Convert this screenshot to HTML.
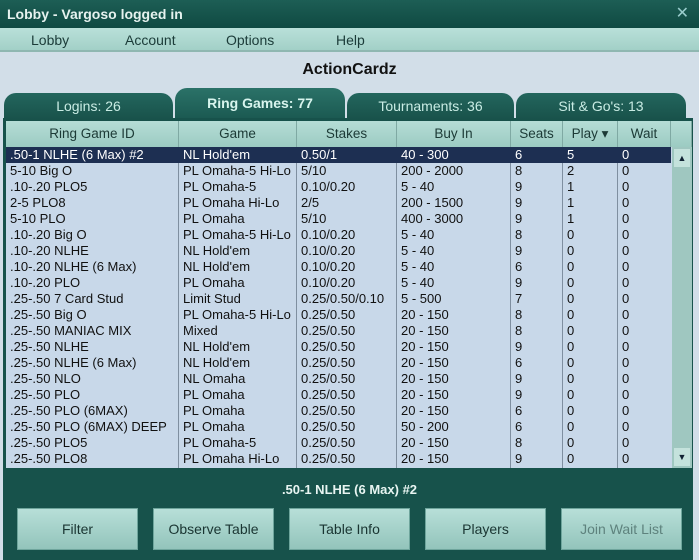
<!DOCTYPE html>
<html><head><style>
*{margin:0;padding:0;box-sizing:border-box}
body{width:699px;height:560px;overflow:hidden;background:#d2dee8;font-family:"Liberation Sans",sans-serif;position:relative}
.title{position:absolute;left:0;top:0;width:699px;height:28px;background:linear-gradient(#1d5e55,#0f4a42);color:#e6f2ef;font-weight:bold;font-size:14px;line-height:28px;padding-left:7px}
.title .x{position:absolute;right:10px;top:0;color:#9cc;font-weight:normal;font-size:16px}
.menu{position:absolute;left:0;top:28px;width:699px;height:24px;background:linear-gradient(#b9e0d9,#a2d0c7);border-bottom:2px solid #8fb7b1}
.menu span{position:absolute;top:4px;font-size:14px;color:#1b3b38}
.brand{position:absolute;top:61px;width:699px;text-align:center;font-weight:bold;font-size:16px;color:#111}
.tab{position:absolute;height:30px;border-radius:12px 12px 0 0;background:linear-gradient(#23665d,#174f48);color:#c9ece4;font-size:14px;text-align:center;line-height:26px}
.tab.sel{background:linear-gradient(#2b7268,#1b5a52);color:#d8f5ee;font-weight:bold;line-height:30px}
.panel{position:absolute;left:3px;top:118px;width:690px;height:442px;background:#17524b}
.grid{position:absolute;left:6px;top:121px;width:686px;height:347px;background:#c8d8e9}
.hdr{position:absolute;top:0;height:26px;background:linear-gradient(#b6ddd6,#9ccbc2);border-right:1px solid #7fa9a3;font-size:13.5px;color:#1c3a36;text-align:center;line-height:25px}
.col{position:absolute;top:26px;height:321px;border-right:1px solid #7f8fa0}
.row{position:absolute;left:0;width:665px;height:16px;font-size:13px;color:#111;line-height:16px}
.row span{position:absolute;top:0;padding-left:4px;white-space:nowrap}
.row.sel{background:#1d2f52;color:#fff}
.sb{position:absolute;left:666px;top:26px;width:20px;height:321px;background:#9fc7c0}
.sb .b{position:absolute;left:2px;width:16px;height:18px;background:#c4e2dc;font-size:9px;text-align:center;line-height:18px;color:#123}
.cur{position:absolute;top:482px;width:699px;text-align:center;color:#e8f5f2;font-weight:bold;font-size:13px}
.btn{position:absolute;top:508px;width:121px;height:42px;background:linear-gradient(#b7dfd8,#93c4bb);border:1px solid #6ea59c;font-size:14px;color:#1a3532;text-align:center;line-height:40px}
</style></head><body>
<div class="title">Lobby - Vargoso logged in<span class="x">✕</span></div>
<div class="menu"><span style="left:31px">Lobby</span><span style="left:125px">Account</span><span style="left:226px">Options</span><span style="left:336px">Help</span></div>
<div class="brand">ActionCardz</div>
<div class="panel"></div>
<div class="tab" style="left:4px;top:93px;width:169px">Logins: 26</div>
<div class="tab" style="left:347px;top:93px;width:167px">Tournaments: 36</div>
<div class="tab" style="left:516px;top:93px;width:170px">Sit &amp; Go's: 13</div>
<div class="tab sel" style="left:175px;top:88px;width:170px">Ring Games: 77</div>
<div class="grid">
<div class="hdr" style="left:0;width:173px">Ring Game ID</div>
<div class="hdr" style="left:173px;width:118px">Game</div>
<div class="hdr" style="left:291px;width:100px">Stakes</div>
<div class="hdr" style="left:391px;width:114px">Buy In</div>
<div class="hdr" style="left:505px;width:52px">Seats</div>
<div class="hdr" style="left:557px;width:55px">Play ▾</div>
<div class="hdr" style="left:612px;width:53px">Wait</div>
<div class="hdr" style="left:665px;width:21px"></div>
<div class="col" style="left:0;width:173px"></div>
<div class="col" style="left:173px;width:118px"></div>
<div class="col" style="left:291px;width:100px"></div>
<div class="col" style="left:391px;width:114px"></div>
<div class="col" style="left:505px;width:52px"></div>
<div class="col" style="left:557px;width:55px"></div>
<div id="rows"></div>
<div class="sb"><div class="b" style="top:2px">▲</div><div class="b" style="top:301px">▼</div></div>
</div>
<div class="cur">.50-1 NLHE (6 Max) #2</div>
<div class="btn" style="left:17px">Filter</div>
<div class="btn" style="left:153px">Observe Table</div>
<div class="btn" style="left:289px">Table Info</div>
<div class="btn" style="left:425px">Players</div>
<div class="btn" style="left:561px;color:#5e827d">Join Wait List</div>
<script>
var d=[[".50-1 NLHE (6 Max) #2","NL Hold'em","0.50/1","40 - 300",6,5],
["5-10 Big O","PL Omaha-5 Hi-Lo","5/10","200 - 2000",8,2],
[".10-.20 PLO5","PL Omaha-5","0.10/0.20","5 - 40",9,1],
["2-5 PLO8","PL Omaha Hi-Lo","2/5","200 - 1500",9,1],
["5-10 PLO","PL Omaha","5/10","400 - 3000",9,1],
[".10-.20 Big O","PL Omaha-5 Hi-Lo","0.10/0.20","5 - 40",8,0],
[".10-.20 NLHE","NL Hold'em","0.10/0.20","5 - 40",9,0],
[".10-.20 NLHE (6 Max)","NL Hold'em","0.10/0.20","5 - 40",6,0],
[".10-.20 PLO","PL Omaha","0.10/0.20","5 - 40",9,0],
[".25-.50 7 Card Stud","Limit Stud","0.25/0.50/0.10","5 - 500",7,0],
[".25-.50 Big O","PL Omaha-5 Hi-Lo","0.25/0.50","20 - 150",8,0],
[".25-.50 MANIAC MIX","Mixed","0.25/0.50","20 - 150",8,0],
[".25-.50 NLHE","NL Hold'em","0.25/0.50","20 - 150",9,0],
[".25-.50 NLHE (6 Max)","NL Hold'em","0.25/0.50","20 - 150",6,0],
[".25-.50 NLO","NL Omaha","0.25/0.50","20 - 150",9,0],
[".25-.50 PLO","PL Omaha","0.25/0.50","20 - 150",9,0],
[".25-.50 PLO (6MAX)","PL Omaha","0.25/0.50","20 - 150",6,0],
[".25-.50 PLO (6MAX) DEEP","PL Omaha","0.25/0.50","50 - 200",6,0],
[".25-.50 PLO5","PL Omaha-5","0.25/0.50","20 - 150",8,0],
[".25-.50 PLO8","PL Omaha Hi-Lo","0.25/0.50","20 - 150",9,0]];
var L=[0,173,291,391,505,557,612],h="";
d.forEach(function(r,i){r.push(0);h+='<div class="row'+(i?'':' sel')+'" style="top:'+(26+i*16)+'px">';
r.forEach(function(c,j){h+='<span style="left:'+L[j]+'px">'+c+'</span>'});h+='</div>'});
document.getElementById('rows').innerHTML=h;
</script>
</body></html>
